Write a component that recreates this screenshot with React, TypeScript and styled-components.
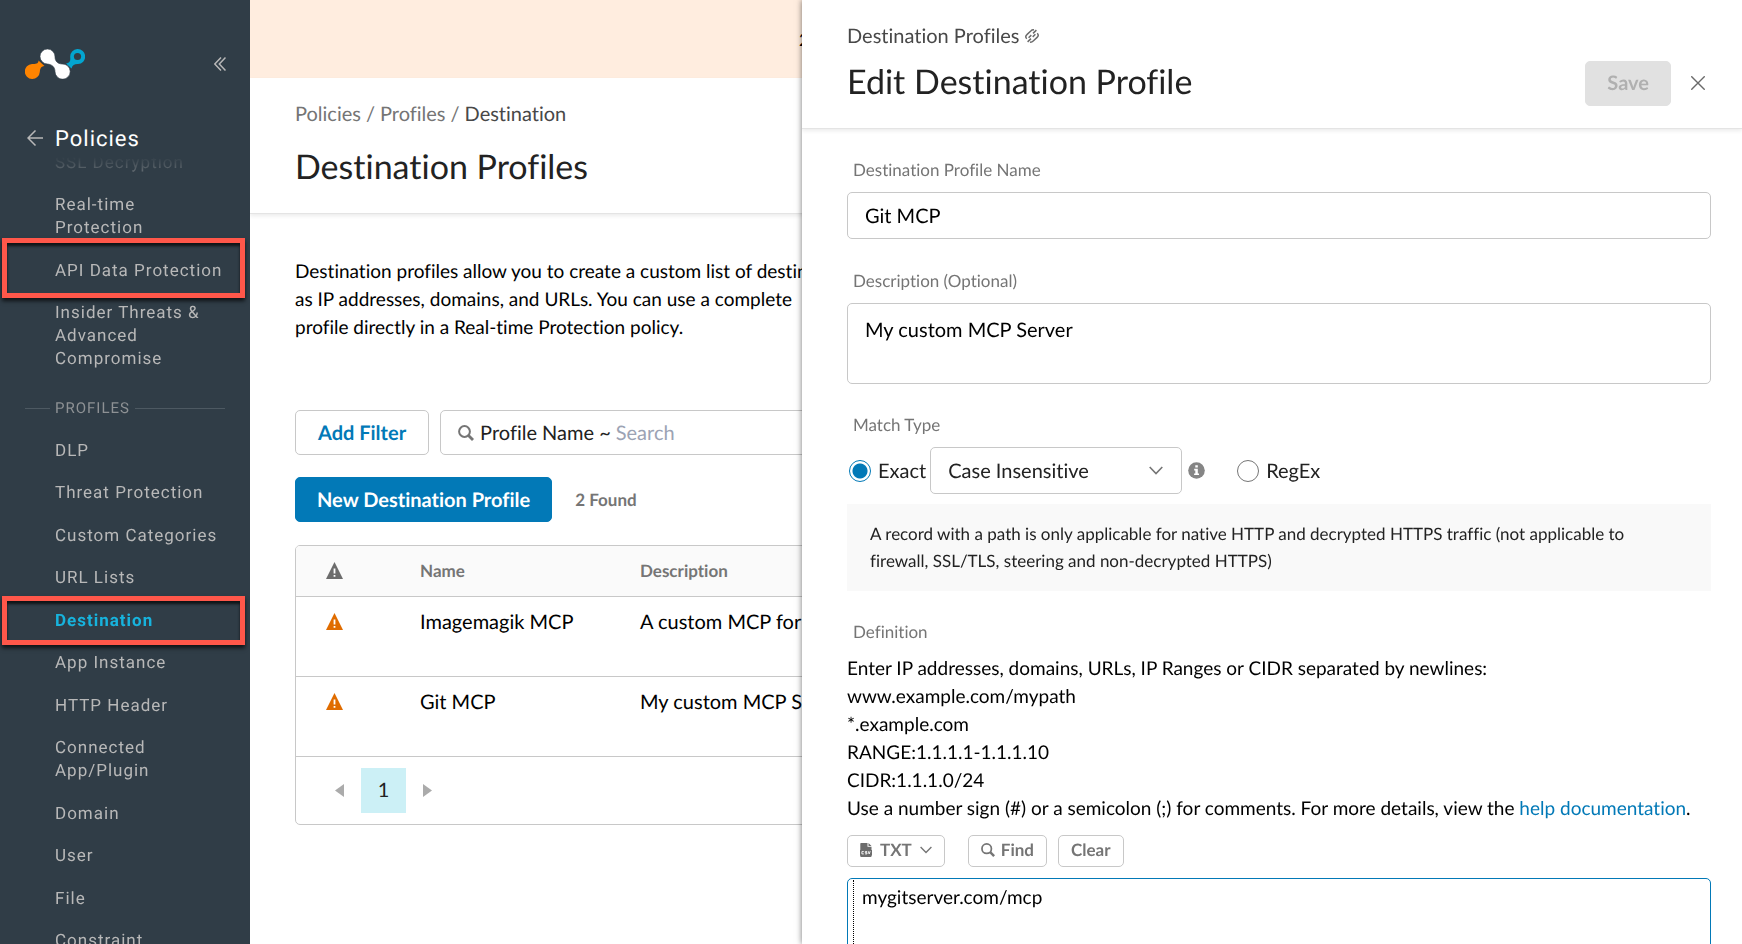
import React from "react";
import styled, { createGlobalStyle, css } from "styled-components";

const color = {
  nav: "#303d47",
  navText: "#b8b8b8",
  accent: "#17b3dd",
  primary: "#0279b7",
  border: "#c8c8c8",
  muted: "#757575",
  ink: "#222222",
  mark: "#ff574a",
};

const GlobalStyle = createGlobalStyle`
  *, *::before, *::after { box-sizing: border-box; }
  html, body, #root { height: 100%; }
  body {
    margin: 0;
    overflow: hidden;
    background: #fff;
    color: #000;
    font-family: Lato, "Liberation Sans", sans-serif;
    font-size: 20px;
    line-height: 28px;
    font-variant-ligatures: no-common-ligatures;
    text-rendering: geometricPrecision;
  }
  button, input, select, textarea {
    font: inherit;
    color: inherit;
    text-rendering: inherit;
    font-variant-ligatures: inherit;
  }
  button { cursor: pointer; }
  a { color: inherit; text-decoration: none; }
  svg { display: block; flex: none; }
`;

const Shell = styled.div`
  display: flex;
  height: 100vh;
  overflow: hidden;
`;

/* ---------- Side navigation ---------- */

const Sidebar = styled.aside`
  display: flex;
  flex-direction: column;
  flex: none;
  width: 250px;
  background: ${color.nav};
  color: ${color.navText};
  font-family: Roboto, "Liberation Sans", sans-serif;
  letter-spacing: 1px;
`;

const SidebarTop = styled.div`
  display: flex;
  align-items: center;
  justify-content: space-between;
  padding: 49px 24px 0 25px;
  height: 79px;
`;

const IconButton = styled.button`
  display: flex;
  align-items: center;
  justify-content: center;
  padding: 0;
  border: 0;
  background: none;
`;

const SidebarTitle = styled.div`
  display: flex;
  align-items: flex-start;
  gap: 12px;
  margin-top: 46px;
  padding-left: 27px;
  height: 28px;
  flex: none;
`;

const BackButton = styled(IconButton)`
  height: 26px;
`;

const SidebarHeading = styled.h2`
  margin: 0;
  color: #fff;
  font-size: 22px;
  line-height: 30px;
  font-weight: 400;
`;

const NavScroll = styled.nav`
  flex: 1;
  min-height: 0;
  margin-top: 4px;
  overflow: hidden;
  mask-image: linear-gradient(transparent, #000 40px);
`;

const NavList = styled.ul`
  margin: 0;
  padding: 0;
  list-style: none;
  &:first-child { margin-top: -15px; }
`;

const highlight = css<{ $above: number; $below: number }>`
  &::after {
    content: "";
    position: absolute;
    left: 2px;
    right: 5px;
    top: -${(p) => p.$above}px;
    bottom: -${(p) => p.$below}px;
    border: 5px solid ${color.mark};
    box-shadow: 0 3px 4px rgba(0, 0, 0, 0.7), inset 0 3px 3px rgba(0, 0, 0, 0.7);
    pointer-events: none;
  }
`;

const NavItem = styled.li<{ $marked: boolean; $above: number; $below: number }>`
  position: relative;
  padding: 10px 25px 9px 55px;
  font-size: 17px;
  line-height: 23px;
  &:nth-child(even) { padding-bottom: 10px; }
  ${(p) => p.$marked && highlight}
`;

const NavLink = styled.a<{ $active: boolean }>`
  color: ${(p) => (p.$active ? color.accent : color.navText)};
  font-weight: ${(p) => (p.$active ? 700 : 400)};
`;

const NavSection = styled.h3`
  display: flex;
  align-items: center;
  gap: 5px;
  height: 44px;
  margin: 5px 25px 0;
  font-size: 15px;
  line-height: 20px;
  font-weight: 400;
  color: #8d9194;
  &::before, &::after { content: ""; height: 1px; background: #4d5962; }
  &::before { width: 25px; }
  &::after { flex: 1; }
`;

/* ---------- Page behind the drawer ---------- */

const Page = styled.main`
  flex: 1;
  min-width: 0;
  overflow: hidden;
`;

const Banner = styled.div`
  height: 78px;
  padding: 26px 0 0 549px;
  background: #ffeddf;
  font-size: 17px;
`;

const PageHeader = styled.header`
  height: 136px;
  padding: 22px 45px 0;
  border-bottom: 1px solid #e4e4e4;
  box-shadow: 0 2px 4px rgba(0, 0, 0, 0.08);
`;

const Breadcrumb = styled.nav`
  display: flex;
  gap: 5px;
  color: ${color.muted};
`;

const Current = styled.span`
  color: #484848;
`;

const Title = styled.h1`
  margin: 0;
  padding-bottom: 2px;
  color: ${color.ink};
  font-size: 34px;
  line-height: 44px;
  font-weight: 400;
`;

const PageTitle = styled(Title)`
  margin-top: 17px;
`;

const PageBody = styled.div`
  padding: 44px 45px 0;
`;

const Intro = styled.p`
  margin: 0 0 68px;
  font-size: 19px;
  white-space: nowrap;
`;

const Toolbar = styled.div`
  display: flex;
  align-items: center;
  gap: 11px;
`;

const Button = styled.button<{ $kind: "primary" | "outline" | "disabled" }>`
  height: 45px;
  padding: 0 21px;
  border: 1px solid;
  border-radius: 5px;
  font-weight: 700;
  white-space: nowrap;
  ${(p) =>
    p.$kind === "primary"
      ? css`background: ${color.primary}; border-color: ${color.primary}; color: #fff;`
      : p.$kind === "outline"
      ? css`padding: 0 22px; background: #fff; border-color: ${color.border}; color: ${color.primary};`
      : css`background: #e1e1e1; border-color: #e1e1e1; color: #b0b0b0;`}
`;

const SearchBox = styled.label`
  display: flex;
  align-items: center;
  flex: 1;
  height: 45px;
  padding: 0 17px;
  border: 1px solid ${color.border};
  border-radius: 5px;
  color: ${color.ink};
`;

const SearchField = styled.span`
  margin: 0 5px 0 6px;
`;

const SearchInput = styled.input`
  flex: 1;
  min-width: 0;
  padding: 0;
  border: 0;
  outline: 0;
  background: none;
  &::placeholder { color: #9ca3b4; opacity: 1; }
`;

const Actions = styled.div`
  display: flex;
  align-items: center;
  gap: 23px;
  margin: 22px 0 23px;
`;

const Found = styled.span`
  color: ${color.muted};
  font-size: 17px;
  font-weight: 700;
`;

const TableFrame = styled.div`
  border: 1px solid ${color.border};
  border-radius: 5px;
  overflow: hidden;
`;

const Table = styled.table`
  width: 100%;
  border-collapse: collapse;
  table-layout: fixed;
`;

const cell = css`
  padding: 0 0 0 30px;
  text-align: left;
  border-bottom: 1px solid ${color.border};
`;

const HeadCell = styled.th<{ $width?: number }>`
  ${cell}
  width: ${(p) => (p.$width ? `${p.$width}px` : "auto")};
  height: 50px;
  background: #fafafa;
  color: ${color.muted};
  font-size: 17px;
  font-weight: 700;
`;

const Cell = styled.td`
  ${cell}
  height: 80px;
  padding-top: 11px;
  vertical-align: top;
`;

const IconCell = styled.div`
  display: flex;
  align-items: center;
  height: 28px;
`;

const Pager = styled.nav`
  display: flex;
  align-items: center;
  gap: 17px;
  height: 67px;
  padding-left: 39px;
`;

const PageNumber = styled.button`
  width: 45px;
  height: 45px;
  padding: 0;
  border: 0;
  background: #ccf0f6;
  color: ${color.ink};
`;

/* ---------- Drawer ---------- */

const Drawer = styled.section`
  position: fixed;
  top: 0;
  right: 0;
  bottom: 0;
  display: flex;
  flex-direction: column;
  width: 940px;
  max-width: 100vw;
  overflow: hidden;
  background: #fff;
  box-shadow: 0 0 6px rgba(0, 0, 0, 0.55);
`;

const DrawerHeader = styled.header`
  flex: none;
  height: 129px;
  padding: 22px 31px 0 45px;
  border-bottom: 1px solid #e4e4e4;
  box-shadow: 0 2px 4px rgba(0, 0, 0, 0.08);
`;

const Origin = styled.div`
  display: flex;
  align-items: center;
  gap: 6px;
  color: #484848;
`;

const HeaderRow = styled.div`
  display: flex;
  align-items: center;
  justify-content: space-between;
  margin-top: 10px;
`;

const HeaderActions = styled.div`
  display: flex;
  align-items: center;
  gap: 20px;
  padding-right: 6px;
`;

const Form = styled.form`
  display: flex;
  flex-direction: column;
  flex: 1;
  min-height: 0;
  padding: 29px 31px 0 45px;
`;

const label = css`
  display: block;
  padding: 0 0 0 6px;
  margin: 0 0 10px;
  color: ${color.muted};
  font-size: 17px;
  line-height: 24px;
  font-weight: 400;
`;

const Label = styled.label`${label}`;
const Legend = styled.legend`${label}`;
const SectionLabel = styled.h2`${label}`;

const field = css`
  display: block;
  flex: none;
  width: 100%;
  padding: 0 17px;
  border: 1px solid ${color.border};
  border-radius: 5px;
  outline: 0;
  background: #fff;
`;

const TextInput = styled.input`
  ${field}
  height: 47px;
  margin-bottom: 30px;
`;

const TextArea = styled.textarea`
  ${field}
  height: 81px;
  padding-top: 12px;
  margin-bottom: 29px;
  resize: none;
`;

const Fieldset = styled.fieldset`
  flex: none;
  min-width: 0;
  margin: 0;
  padding: 0;
  border: 0;
`;

const MatchRow = styled.div`
  display: flex;
  align-items: center;
  padding-left: 2px;
  color: ${color.ink};
`;

const RadioLabel = styled.label`
  display: flex;
  align-items: center;
  gap: 7px;
`;

const Radio = styled.input`
  appearance: none;
  width: 22px;
  height: 22px;
  margin: 0;
  border: 1px solid #767676;
  border-radius: 50%;
  &:checked {
    border-color: ${color.primary};
    background: radial-gradient(circle, ${color.primary} 7px, #fff 8px);
  }
`;

const SelectWrap = styled.span`
  display: grid;
  align-items: center;
  width: 252px;
  margin: 0 6px 0 4px;
  > * { grid-area: 1 / 1; }
  > svg { justify-self: end; margin-right: 19px; pointer-events: none; }
`;

const Select = styled.select`
  ${field}
  appearance: none;
  height: 47px;
`;

const InfoWrap = styled.span`
  margin-right: 32px;
`;

const Notice = styled.p`
  flex: none;
  margin: 10px 0 29px;
  padding: 16px 50px 17px 23px;
  background: #f9f9f9;
  color: ${color.ink};
  font-size: 17px;
  line-height: 27px;
`;

const Help = styled.p`
  flex: none;
  margin: 1px 0 0;
  font-size: 19px;
`;

const HelpLink = styled.a`
  color: ${color.primary};
`;

const EditorTools = styled.div`
  display: flex;
  flex: none;
  gap: 11px;
  margin: 12px 0 11px;
`;

const SmallButton = styled.button<{ $apart?: boolean }>`
  display: flex;
  align-items: center;
  gap: ${(p) => (p.$apart ? 8 : 6)}px;
  height: 32px;
  padding: 0 12px 2px;
  margin-right: ${(p) => (p.$apart ? 12 : 0)}px;
  border: 1px solid ${color.border};
  border-radius: 5px;
  background: #fff;
  color: ${color.muted};
  font-size: 17px;
  line-height: 24px;
  font-weight: 700;
`;

const Editor = styled.div`
  flex: none;
  height: 280px;
  padding: 1px 5px;
  border: 1px solid ${color.primary};
  border-radius: 5px;
`;

const EditorText = styled.textarea`
  display: block;
  width: 100%;
  height: 100%;
  padding: 4px 8px;
  border: 0;
  border-left: 1px dotted #000;
  outline: 0;
  resize: none;
  background: none;
  font-size: 19px;
`;

/* ---------- Icons ---------- */

const Logo = () => (
  <svg width="60" height="30" viewBox="0 0 60 30" role="img" aria-label="Home">
    <path fill="#ff8400" d="M13.500 11.500 19.500 17C15.500 17.500 15.200 20 14.800 23A7.500 7.500 0 1 1 7 15C10.500 15 13.700 15 13.500 11.500Z" />
    <path fill="#03a5d0" d="M41 14.500C45.500 14 45.500 11 45.200 8A7.500 7.500 0 1 1 53 15.100C49.500 15 47.500 16 46.500 19.500Z" />
    <circle cx="52.500" cy="7.500" r="3.600" fill={color.nav} />
    <path
      fill="#fff"
      stroke={color.nav}
      strokeWidth="0.600"
      d="M22.500 0A7.600 7.600 0 0 1 30 8C30 12 32.500 14.800 37 15A7.600 7.600 0 1 1 30 22.500C30 18 27 15.500 22.500 15A7.500 7.500 0 0 1 22.500 0Z"
    />
  </svg>
);

const CollapseIcon = () => (
  <svg width="12" height="14" viewBox="0 0 12 14" fill="none" stroke="#b8b8b8" strokeWidth="1.500">
    <path d="M7 .5.8 7 7 13.500M11.500.5 5.300 7l6.200 6.500" />
  </svg>
);

const BackIcon = () => (
  <svg width="16" height="16" viewBox="0 0 16 16" fill="none" stroke="#b8b8b8" strokeWidth="1.500">
    <path d="M8.500.5 1 8l7.500 7.500M1 8h15" />
  </svg>
);

const SearchIcon = ({ size }: { size: number }) => (
  <svg width={size} height={size} viewBox="0 0 16 16" fill="none" stroke={color.muted}>
    <circle cx="6.500" cy="6.500" r="5.400" strokeWidth="2" />
    <path d="M10.500 10.500 15 15" strokeWidth="2.800" />
  </svg>
);

const WarningIcon = ({ fill }: { fill: string }) => (
  <svg width="17" height="17" viewBox="0 0 17 17">
    <path d="M8.500 0 17 17H0Z" fill={fill} />
    <path d="M7.600 6.500h1.800v5H7.600zM7.600 13h1.800v1.700H7.600z" fill="#fff" />
  </svg>
);

const Triangle = ({ next }: { next?: boolean }) => (
  <svg width="9" height="13" viewBox="0 0 9 13">
    <path d={next ? "M0 0 9 6.500 0 13Z" : "M9 0 0 6.500 9 13Z"} fill="#ababab" />
  </svg>
);

const LinkIcon = () => (
  <svg width="14" height="14" viewBox="0 0 14 14" fill="none" stroke="#6a6a6a" strokeWidth="1.500">
    <path d="M1.800 9.800C.2 8.400.6 6.700 1.900 5.600L5.800 2C6.800 1 7.800.7 9 .9" />
    <path d="M12.200 4.200c1.600 1.400 1.200 3.100-.1 4.200L8.200 12c-1 1-2 1.300-3.200 1.100" />
    <path d="M3.600 8.700 6.300 6.100M8 4.400 11.400 1.100M10.400 5.300 7.700 7.900M6 9.600 2.600 12.900" />
  </svg>
);

const CloseIcon = () => (
  <svg width="14" height="14" viewBox="0 0 14 14" fill="none" stroke="#6a6a6a" strokeWidth="1.400">
    <path d="M.3.3 13.700 13.700M13.700.3.3 13.700" />
  </svg>
);

const ChevronIcon = ({ size }: { size: number }) => (
  <svg width={size} height={size / 2 + 2} viewBox="0 0 14 9" fill="none" stroke="#757575" strokeWidth="1.600">
    <path d="m.7 1 6.300 6.500L13.300 1" />
  </svg>
);

const InfoIcon = () => (
  <svg width="17" height="17" viewBox="0 0 17 17">
    <circle cx="8.500" cy="8.500" r="8.300" fill="#858585" />
    <path d="M7.300 3.300h2.500v2.200H7.300zM6.200 6.800h3.600v4.700h1.200v1.600H6.100v-1.600h1.200V8.400H6.200z" fill="#fff" />
  </svg>
);

const CsvIcon = () => (
  <svg width="12" height="14" viewBox="0 0 12 14">
    <path fill="#6c6c6c" d="M1 0h6.500v3.800H11.500V7H.3V.8C.3.300.6 0 1 0ZM8.500 0l3 2.900h-3ZM.3 12.500h11.200v.7c0 .5-.3.800-.8.800H1.100c-.5 0-.8-.3-.8-.8ZM0 7h12v5.500H0Z" />
    <path fill="none" stroke="#fff" strokeWidth=".9" d="M3.800 8.600H1.900v2.300h1.900M7 8.600H5.300v1.100H7v1.200H5.100M8.200 8.200l1 2.800 1-2.800" />
  </svg>
);

/* ---------- Content ---------- */

type Entry = { text: string; active?: boolean; mark?: [number, number] };

const policyItems: Entry[] = [
  { text: "SSL Decryption" },
  { text: "Real-time Protection" },
  { text: "API Data Protection", mark: [12, 6] },
  { text: "Insider Threats & Advanced Compromise" },
];

const profileItems: Entry[] = [
  { text: "DLP" },
  { text: "Threat Protection" },
  { text: "Custom Categories" },
  { text: "URL Lists" },
  { text: "Destination", active: true, mark: [4, 3] },
  { text: "App Instance" },
  { text: "HTTP Header" },
  { text: "Connected App/Plugin" },
  { text: "Domain" },
  { text: "User" },
  { text: "File" },
  { text: "Constraint" },
];

const profiles = [
  { name: "Imagemagik MCP", description: "A custom MCP for images" },
  { name: "Git MCP", description: "My custom MCP Server" },
];

const NavEntries = ({ items }: { items: Entry[] }) => (
  <NavList>
    {items.map((item) => (
      <NavItem
        key={item.text}
        $marked={Boolean(item.mark)}
        $above={item.mark ? item.mark[0] : 0}
        $below={item.mark ? item.mark[1] : 0}
      >
        <NavLink href="#" $active={Boolean(item.active)}>{item.text}</NavLink>
      </NavItem>
    ))}
  </NavList>
);

export default function App() {
  return (
    <Shell>
      <GlobalStyle />
      <Sidebar>
        <SidebarTop>
          <Logo />
          <IconButton aria-label="Collapse menu"><CollapseIcon /></IconButton>
        </SidebarTop>
        <SidebarTitle>
          <BackButton aria-label="Back"><BackIcon /></BackButton>
          <SidebarHeading>Policies</SidebarHeading>
        </SidebarTitle>
        <NavScroll>
          <NavEntries items={policyItems} />
          <NavSection>PROFILES</NavSection>
          <NavEntries items={profileItems} />
        </NavScroll>
      </Sidebar>

      <Page>
        <Banner>2</Banner>
        <PageHeader>
          <Breadcrumb aria-label="Breadcrumb">
            <a href="#">Policies</a>
            <span>/</span>
            <a href="#">Profiles</a>
            <span>/</span>
            <Current>Destination</Current>
          </Breadcrumb>
          <PageTitle>Destination Profiles</PageTitle>
        </PageHeader>
        <PageBody>
          <Intro>
            Destination profiles allow you to create a custom list of destinations such
            <br />
            as IP addresses, domains, and URLs. You can use a complete
            <br />
            profile directly in a Real-time Protection policy.
          </Intro>
          <Toolbar>
            <Button $kind="outline">Add Filter</Button>
            <SearchBox>
              <SearchIcon size={16} />
              <SearchField>Profile Name ~</SearchField>
              <SearchInput placeholder="Search" />
            </SearchBox>
          </Toolbar>
          <Actions>
            <Button $kind="primary">New Destination Profile</Button>
            <Found>2 Found</Found>
          </Actions>
          <TableFrame>
            <Table>
              <thead>
                <tr>
                  <HeadCell $width={94} aria-label="Status"><WarningIcon fill="#6c6c6c" /></HeadCell>
                  <HeadCell $width={220}>Name</HeadCell>
                  <HeadCell>Description</HeadCell>
                </tr>
              </thead>
              <tbody>
                {profiles.map((profile) => (
                  <tr key={profile.name}>
                    <Cell><IconCell><WarningIcon fill="#e06c00" /></IconCell></Cell>
                    <Cell>{profile.name}</Cell>
                    <Cell>{profile.description}</Cell>
                  </tr>
                ))}
              </tbody>
            </Table>
            <Pager aria-label="Pages">
              <IconButton aria-label="Previous page"><Triangle /></IconButton>
              <PageNumber>1</PageNumber>
              <IconButton aria-label="Next page"><Triangle next /></IconButton>
            </Pager>
          </TableFrame>
        </PageBody>
      </Page>

      <Drawer aria-label="Edit Destination Profile">
        <DrawerHeader>
          <Origin>Destination Profiles <LinkIcon /></Origin>
          <HeaderRow>
            <Title>Edit Destination Profile</Title>
            <HeaderActions>
              <Button $kind="disabled" disabled>Save</Button>
              <IconButton aria-label="Close"><CloseIcon /></IconButton>
            </HeaderActions>
          </HeaderRow>
        </DrawerHeader>
        <Form>
          <Label htmlFor="name">Destination Profile Name</Label>
          <TextInput id="name" defaultValue="Git MCP" />
          <Label htmlFor="description">Description (Optional)</Label>
          <TextArea id="description" defaultValue="My custom MCP Server" />
          <Fieldset>
            <Legend>Match Type</Legend>
            <MatchRow>
              <RadioLabel>
                <Radio type="radio" name="match" defaultChecked />
                Exact
              </RadioLabel>
              <SelectWrap>
                <Select aria-label="Case sensitivity" defaultValue="insensitive">
                  <option value="insensitive">Case Insensitive</option>
                  <option value="sensitive">Case Sensitive</option>
                </Select>
                <ChevronIcon size={14} />
              </SelectWrap>
              <InfoWrap><InfoIcon /></InfoWrap>
              <RadioLabel>
                <Radio type="radio" name="match" />
                RegEx
              </RadioLabel>
            </MatchRow>
          </Fieldset>
          <Notice>
            A record with a path is only applicable for native HTTP and decrypted HTTPS traffic (not applicable to
            firewall, SSL/TLS, steering and non-decrypted HTTPS)
          </Notice>
          <SectionLabel>Definition</SectionLabel>
          <Help>
            Enter IP addresses, domains, URLs, IP Ranges or CIDR separated by newlines:
            <br />
            www.example.com/mypath
            <br />
            *.example.com
            <br />
            RANGE:1.1.1.1-1.1.1.10
            <br />
            CIDR:1.1.1.0/24
            <br />
            Use a number sign (#) or a semicolon (;) for comments. For more details, view the{" "}
            <HelpLink href="#">help documentation</HelpLink>.
          </Help>
          <EditorTools>
            <SmallButton type="button" $apart><CsvIcon />TXT<ChevronIcon size={12} /></SmallButton>
            <SmallButton type="button"><SearchIcon size={14} />Find</SmallButton>
            <SmallButton type="button">Clear</SmallButton>
          </EditorTools>
          <Editor>
            <EditorText aria-label="Definition" spellCheck={false} defaultValue="mygitserver.com/mcp" />
          </Editor>
        </Form>
      </Drawer>
    </Shell>
  );
}
